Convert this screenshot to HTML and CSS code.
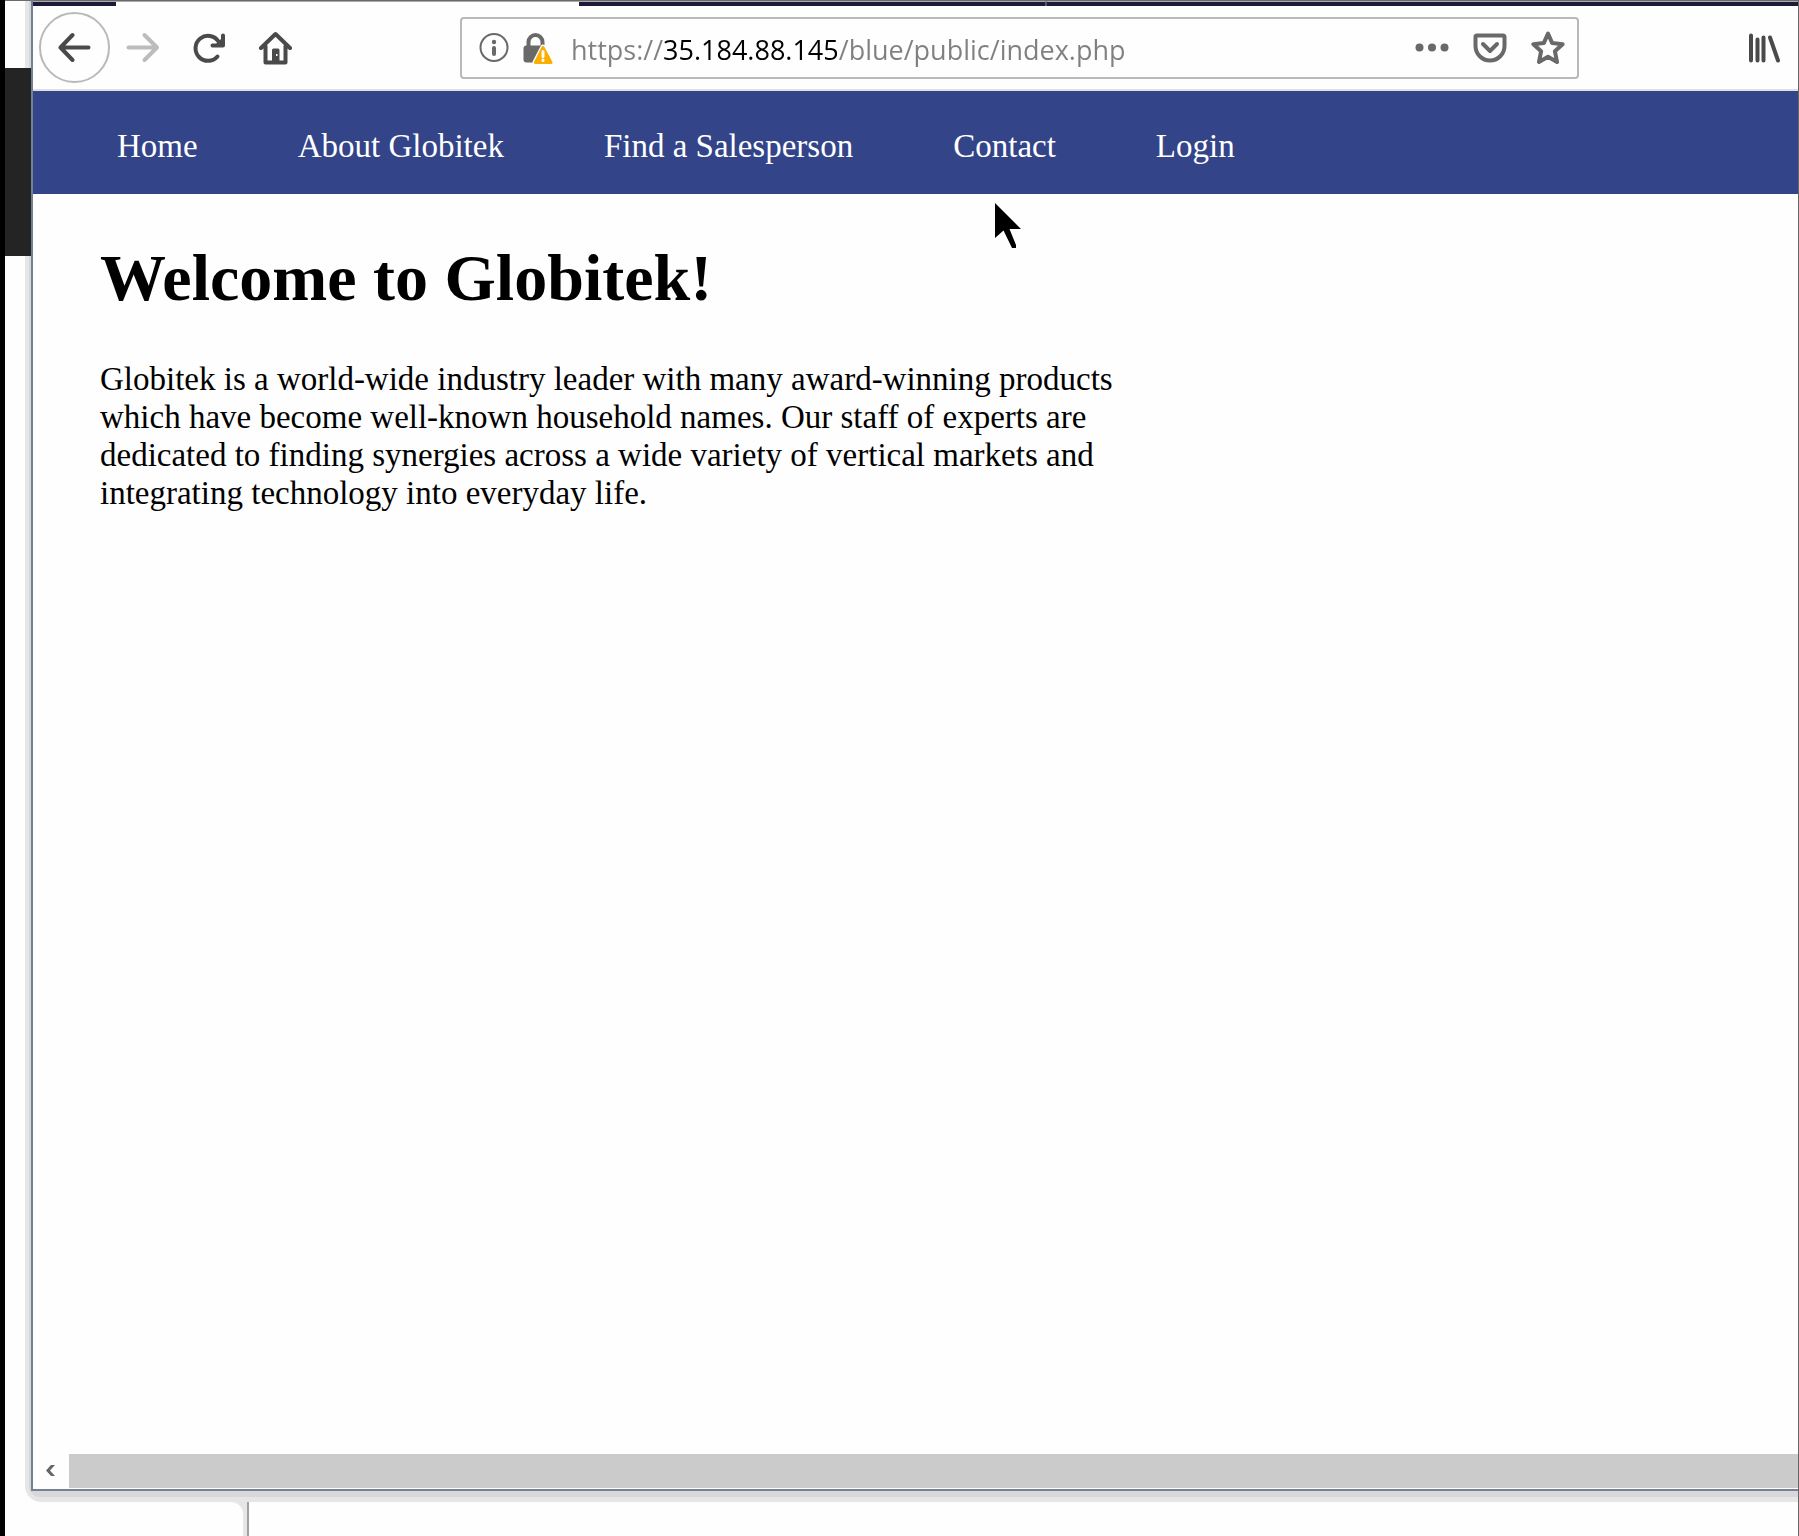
FILE: index.html
```
<!DOCTYPE html>
<html lang="en">
<head>
<meta charset="utf-8">
<title>Globitek</title>
<link rel="stylesheet" href="styles.css">
</head>
<body>
<div class="desktop">
  <div class="backdrop"><div class="backdrop-block"></div></div>
  <div class="window">
    <div class="tabs">
      <div class="tab tab-first"></div>
      <div class="tab tab-active"></div>
      <div class="tab tab-idle"></div>
      <div class="tab tab-rest"></div>
    </div>
    <div class="toolbar">
      <button class="tool tool-back" aria-label="Back">
        <svg class="icon" viewBox="0 0 34 34"><path class="line" d="M30.500 16.500H3M14.500 4L2.500 16.500l12 12.500"/></svg>
      </button>
      <button class="tool tool-off" aria-label="Forward">
        <svg class="icon" viewBox="0 0 34 34"><path class="line" d="M2.500 16.500h28M18.500 4L31 16.500 18.500 29"/></svg>
      </button>
      <button class="tool" aria-label="Reload">
        <svg class="icon" viewBox="0 0 34 34"><path class="line" d="M25.500 25.500A12.500 12.500 0 1 1 26.500 10.500M31 4.500V14.500H20.500"/><path d="M31 6v9H22z"/></svg>
      </button>
      <button class="tool" aria-label="Home">
        <svg class="icon" viewBox="0 0 34 34"><path class="line" d="M3 17L17.500 3 32 17M7.500 15v16.500H27.500V15"/><path fill-rule="evenodd" d="M15.500 17.500h4.500q1.500 0 1.500 1.500V31h-7.500V19q0-1.500 1.500-1.500zM18 23v2h1.500v-2z"/></svg>
      </button>
      <div class="address">
        <button class="mark" aria-label="Site information">
          <svg class="icon" viewBox="0 0 34 34"><circle class="thin" cx="17" cy="16.500" r="13.500"/><circle cx="17" cy="11" r="2.200"/><path class="line" d="M17 17v6"/></svg>
        </button>
        <button class="mark" aria-label="Connection is not secure">
          <svg class="icon" viewBox="0 0 34 34"><path class="line" d="M9.500 17V11a7 7 0 0 1 14 0v4"/><rect x="4.500" y="14.500" width="22" height="17" rx="3"/><path class="warn-edge" d="M24 16L32 31.500H16z"/><path class="warn" d="M24 16.500L32 31.500H16.500z"/><path class="warn-mark" d="M24 20.500v5M24 29v.5"/></svg>
        </button>
        <input class="url" type="text" aria-label="Address" value="https://35.184.88.145/blue/public/index.php">
        <button class="mark" aria-label="Page actions">
          <svg class="icon" viewBox="0 0 34 34"><circle cx="4.500" cy="16.500" r="4"/><circle cx="17" cy="16.500" r="4"/><circle cx="29.500" cy="16.500" r="4"/></svg>
        </button>
        <button class="mark" aria-label="Save to Pocket">
          <svg class="icon" viewBox="0 0 34 34"><path class="line" d="M4 4.500H30q1.500 0 1.500 1.500V15A14 14 0 0 1 2.500 15V6q0-1.500 1.500-1.500zM10 13l7 7 7-7"/></svg>
        </button>
        <button class="mark" aria-label="Bookmark this page">
          <svg class="icon" viewBox="0 0 34 34"><path class="line" d="M17 2.500l4.200 9.600 10.400 1.100-7.700 7L26 31l-9-5.200L8 31l2.100-10.800-7.700-7 10.400-1.100z"/></svg>
        </button>
      </div>
      <button class="tool" aria-label="Library">
        <svg class="icon" viewBox="0 0 34 34"><path class="line" d="M4 4.500V29.500M10.500 8.500v21M16.500 6.500v23M23 6.500L31 29.500"/></svg>
      </button>
    </div>
    <nav class="menu">
      <a href="#home">Home</a>
      <a href="#about">About Globitek</a>
      <a href="#salesperson">Find a Salesperson</a>
      <a href="#contact">Contact</a>
      <a href="#login">Login</a>
    </nav>
    <main class="page">
      <h1>Welcome to Globitek!</h1>
      <p>Globitek is a world-wide industry leader with many award-winning products which have become well-known household names. Our staff of experts are dedicated to finding synergies across a wide variety of vertical markets and integrating technology into everyday life.</p>
    </main>
    <div class="scrollbar">
      <button class="scroll-left" aria-label="Scroll left">
        <svg viewBox="0 0 10 12"><path d="M5 0h4L4 5.500 9 11H5L0 5.500z"/></svg>
      </button>
      <div class="scroll-thumb"></div>
    </div>
    <svg class="pointer" viewBox="0 0 26 46"><path d="M0 0v35l8.500-7.500L17 45h4v-3L14.500 26H26z"/></svg>
  </div>
  <div class="below"><div class="below-panel"></div></div>
</div>
</body>
</html>
```
FILE: styles.css
```
* { box-sizing: border-box; }

body {
  margin: 0;
  background: #fefefe;
  color: #000;
  font-family: "Liberation Serif", "Times New Roman", serif;
  font-size: 33px;
  line-height: 38px;
}

button {
  display: flex;
  align-items: center;
  justify-content: center;
  flex: none;
  margin: 0;
  padding: 0;
  border: 0;
  background: none;
  color: #4a4a4a;
}

.desktop {
  display: grid;
  grid-template-columns: 26px minmax(0, 1fr);
  grid-template-rows: 1fr 45px;
  min-height: 100vh;
  border-left: 5px solid #000;
  border-right: 1px solid #666;
}

.backdrop {
  z-index: 1;
  padding-top: 67px;
  border-top: 1px solid #6b6b6b;
}

.backdrop-block {
  height: 188px;
  background: #242424;
}

.window {
  position: relative;
  display: flex;
  flex-direction: column;
  border: solid #738096;
  border-width: 0 0 2px 2px;
}

/* Stepped drop shadow behind the window frame */
.window::before,
.window::after {
  content: "";
  position: absolute;
  z-index: -1;
  inset: 0 0 -13px -8px;
  border-bottom-left-radius: 16px;
  background: #e6e6e6;
}

.window::after {
  inset: 0 0 -8px -4px;
  border-bottom-left-radius: 10px;
  background: #d8d8d8;
}

.tabs {
  display: flex;
  height: 6px;
  border-top: 1px solid #6b6b6b;
}

.tab {
  border-top: 1px solid #aaa;
  background: #1c1c3a;
}

.tab-first { width: 83px; }
.tab-active { width: 463px; background: #fefefe; }
.tab-idle { width: 468px; border-right: 2px solid #55556b; }
.tab-rest { flex: 1; }

.toolbar {
  display: flex;
  align-items: center;
  height: 85px;
  padding: 0 1px 0 6px;
  border-bottom: 2px solid #e0e0e2;
  background: #fefefe;
}

.tool {
  width: 66px;
  height: 71px;
}

.tool-back {
  width: 71px;
  border: 2px solid #b9b9b9;
  border-radius: 50%;
}

.tool-off { color: #bcbcbc; }

.icon {
  width: 34px;
  height: 34px;
  fill: currentColor;
}

.line {
  fill: none;
  stroke: currentColor;
  stroke-width: 4;
  stroke-linecap: round;
  stroke-linejoin: round;
}

.thin {
  fill: none;
  stroke: currentColor;
  stroke-width: 2;
}

.warn, .warn-edge {
  fill: #f9ae00;
  stroke: #f9ae00;
  stroke-width: 3;
  stroke-linejoin: round;
}

.warn-edge { stroke: #fefefe; stroke-width: 5; }

.warn-mark {
  fill: none;
  stroke: #fefefe;
  stroke-width: 3;
  stroke-linecap: round;
}

.address {
  display: flex;
  align-items: center;
  flex: 1;
  height: 62px;
  margin: 0 152px;
  padding: 0 12px 0 11px;
  border: 2px solid #b9b9b9;
  border-radius: 4px;
}

.mark {
  width: 42px;
  height: 58px;
  color: #696969;
}

.url ~ .mark { width: 58px; }
.address .mark:last-child { width: 34px; margin-left: 12px; }

/* The host part of the address is drawn darker than the rest */
.url {
  flex: 1;
  min-width: 0;
  height: 58px;
  margin-left: 14px;
  padding: 4px 0 0;
  border: 0;
  background: linear-gradient(to right, #808080 92px, #000 92px, #000 266px, #808080 266px);
  background-clip: text;
  -webkit-background-clip: text;
  color: transparent;
  font: 27px/38px "Open Sans", "Noto Sans", sans-serif;
}

.menu {
  display: flex;
  flex-wrap: wrap;
  gap: 0 100px;
  padding: 36px 84px 29px;
  background: #334488;
}

.menu a {
  color: #fff;
  text-decoration: none;
}

.page {
  flex: 1;
  padding: 46px 67px;
  background: #fefefe;
}

.page h1 {
  margin: 0 0 44px;
  font-size: 66px;
  line-height: 76px;
}

.page p {
  max-width: 1056px;
  margin: 0;
}

.scrollbar {
  display: flex;
  height: 35px;
  padding-bottom: 1px;
  background: #fefefe;
}

.scroll-left { width: 36px; }

.scroll-left svg {
  width: 10px;
  height: 12px;
  fill: #666;
}

.scroll-thumb {
  flex: 1;
  background: #cbcbcb;
}

.pointer {
  position: absolute;
  left: 962px;
  top: 203px;
  width: 26px;
  height: 46px;
}

/* Edge of another window showing under this one */
.below {
  z-index: -2;
  grid-column: 1 / -1;
  width: 244px;
  padding: 11px 4px 0 0;
  border-right: 2px solid #a0a0a0;
  background: linear-gradient(to right, transparent 220px, #e6e6e6 220px);
}

.below-panel {
  height: 34px;
  border-top-right-radius: 12px;
  background: #fefefe;
}
```
